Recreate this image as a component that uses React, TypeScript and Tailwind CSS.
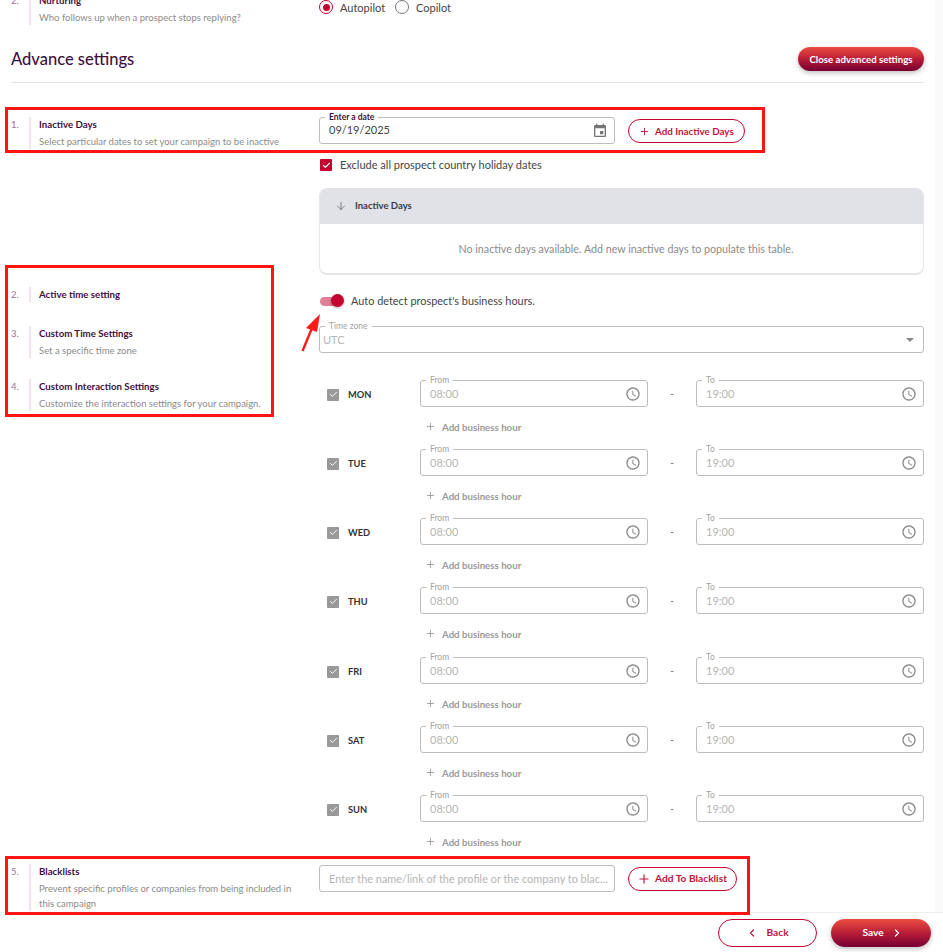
import { ChevronLeft, ChevronRight, Plus, ArrowDown, Check } from 'lucide-react';

const days = [
    { name: 'MON', gap: 'mt-0' },
    { name: 'TUE', gap: 'mt-0' },
    { name: 'WED', gap: 'mt-0' },
    { name: 'THU', gap: 'mt-0' },
    { name: 'FRI', gap: 'mt-[1px]' },
    { name: 'SAT', gap: 'mt-0' },
    { name: 'SUN', gap: 'mt-0' },
];

function SectionLabel({ num, title, desc, className }: { num: string; title: string; desc?: string; className?: string }) {
    return (
        <div className={`flex ${className ?? ''}`}>
            <span className="w-[18px] shrink-0 pt-[1px] text-[9.5px] leading-[14px] text-[#a06f9c]">{num}</span>
            <div className="w-[2px] shrink-0 bg-[#efe3ee]" />
            <div className="pl-[8px]">
                <div className="text-[9.7px] leading-[14px] font-bold text-[#3f0f3f]">{title}</div>
                {desc && <p className="mt-[3px] text-[9.5px] leading-[15px] text-[#8b8b8b]">{desc}</p>}
            </div>
        </div>
    );
}

function ClockIcon() {
    return (
        <svg viewBox="0 0 24 24" className="h-[16px] w-[16px] fill-[#8a8a8a]">
            <path d="M11.99 2C6.47 2 2 6.48 2 12s4.47 10 9.99 10C17.52 22 22 17.52 22 12S17.52 2 11.99 2zM12 20c-4.42 0-8-3.58-8-8s3.58-8 8-8 8 3.58 8 8-3.58 8-8 8z" />
            <path d="M12.5 7H11v6l5.25 3.15.75-1.23-4.5-2.67z" />
        </svg>
    );
}

function TimeField({ label, value }: { label: string; value: string }) {
    return (
        <div className="relative flex h-[27px] w-[228px] items-center justify-between rounded-[3px] border border-[#bdbdbd] pl-[9px] pr-[6px]">
            <span className="absolute -top-[6px] left-[5px] bg-white px-[4px] text-[8.5px] leading-[10px] text-[#a3a3a3]">{label}</span>
            <span className="text-[11px] text-[#b5b5b5]">{value}</span>
            <ClockIcon />
        </div>
    );
}

function OutlineButton({ label, iconSize, className }: { label: string; iconSize: number; className: string }) {
    return (
        <button type="button" className={`flex h-[24px] items-center gap-[3px] rounded-full border border-[#c4032f] bg-white pl-[7px] font-bold text-[#c0143c] ${className}`}>
            <span className="flex w-[16px] justify-center">
                <Plus size={iconSize} strokeWidth={2} />
            </span>
            {label}
        </button>
    );
}

function App() {
    return (
        <div className="relative flex h-[952px] w-[943px] flex-col overflow-hidden bg-white font-['Lato','Noto_Sans',sans-serif]">
            <div className="flex h-[912px] shrink-0 overflow-hidden">
                <div className="w-[935px] shrink-0 px-[11px]">
                    {/* clipped row from the previous section */}
                    <div className="-mt-[7px] flex h-[32px]">
                        <SectionLabel num="2." title="Nurturing" desc="Who follows up when a prospect stops replying?" className="w-[308px]" />
                        <div className="flex items-start gap-[7px] pt-[7px] text-[11px] text-[#444]">
                            <span className="flex h-[14px] w-[14px] items-center justify-center rounded-full border-[1.5px] border-[#c4032f]">
                                <span className="h-[7px] w-[7px] rounded-full bg-[#c4032f]" />
                            </span>
                            <span className="leading-[15px]">Autopilot</span>
                            <span className="ml-[3px] h-[14px] w-[14px] rounded-full border-[1.5px] border-[#777]" />
                            <span className="leading-[15px]">Copilot</span>
                        </div>
                    </div>

                    <div className="flex h-[58px] items-center justify-between border-b border-[#e3e3ea] pt-[11px]">
                        <h1 className="text-[16.5px] font-medium text-[#3f0f3f]">Advance settings</h1>
                        <button type="button" className="h-[24px] w-[126px] rounded-full bg-gradient-to-b from-[#ee4b40] via-[#b81d37] to-[#750030] text-[9.7px] font-bold text-white shadow-[0_2px_5px_rgba(0,0,0,0.25)]">
                            Close advanced settings
                        </button>
                    </div>

                    <div className="flex pt-[34px]">
                        <div className="flex w-[308px] shrink-0 flex-col">
                            <SectionLabel num="1." title="Inactive Days" desc="Select particular dates to set your campaign to be inactive" className="h-[32px]" />
                            <SectionLabel num="2." title="Active time setting" className="mt-[138px] h-[15px]" />
                            <SectionLabel num="3." title="Custom Time Settings" desc="Set a specific time zone" className="mt-[24px] h-[32px]" />
                            <SectionLabel num="4." title="Custom Interaction Settings" desc="Customize the interaction settings for your campaign." className="mt-[21px] h-[32px]" />
                            <SectionLabel num="5." title="Blacklists" desc="Prevent specific profiles or companies from being included in this campaign" className="mt-[453px] h-[47px] [&>div:last-child]:w-[270px]" />
                        </div>

                        <div className="w-[605px] shrink-0">
                            <div className="flex items-center">
                                <div className="relative flex h-[27px] w-[296px] items-center justify-between rounded-[3px] border border-[#bdbdbd] pl-[9px] pr-[6px]">
                                    <span className="absolute -top-[6px] left-[5px] bg-white px-[4px] text-[8.5px] leading-[10px] font-bold text-[#3f0f3f]">Enter a date</span>
                                    <span className="text-[11px] text-[#444]">09/19/2025</span>
                                    <svg viewBox="0 0 24 24" className="h-[16px] w-[16px] fill-[#777]">
                                        <path d="M17 12h-5v5h5v-5zM16 1v2H8V1H6v2H5c-1.11 0-1.99.9-1.99 2L3 19c0 1.1.89 2 2 2h14c1.1 0 2-.9 2-2V5c0-1.1-.9-2-2-2h-1V1h-2zm3 18H5V8h14v11z" />
                                    </svg>
                                </div>
                                <OutlineButton label="Add Inactive Days" iconSize={11} className="ml-[13px] mt-[1px] w-[117px] text-[9.8px]" />
                            </div>

                            <div className="mt-[14px] flex items-center gap-[8px] pl-[1px]">
                                <span className="flex h-[12px] w-[12px] items-center justify-center rounded-[1px] bg-[#c4032f]">
                                    <Check size={9} strokeWidth={3} color="white" />
                                </span>
                                <span className="text-[11px] leading-[14px] text-[#444]">Exclude all prospect country holiday dates</span>
                            </div>

                            <div className="mt-[16px] h-[87px] overflow-hidden rounded-[8px] border-x border-b-2 border-[#e6e6ea]">
                                <div className="flex h-[36px] items-center gap-[8px] bg-[#e1e2e8] pl-[15px] text-[9.5px] font-bold text-[#3b3b46]">
                                    <ArrowDown size={12} strokeWidth={1.6} color="#666" />
                                    Inactive Days
                                </div>
                                <p className="pl-[9px] pt-[18px] text-center text-[10.7px] leading-[14px] text-[#8b8b8b]">
                                    No inactive days available. Add new inactive days to populate this table.
                                </p>
                            </div>

                            <div className="mt-[18px] flex items-center">
                                <span className="relative ml-[1px] h-[9px] w-[22px] rounded-full bg-[#e08096]">
                                    <span className="absolute -top-[2.5px] right-[-2px] h-[13px] w-[13px] rounded-full bg-[#c4032f] shadow-[0_1px_3px_rgba(0,0,0,0.3)]" />
                                </span>
                                <span className="ml-[9px] text-[10.9px] text-[#444]">Auto detect prospect's business hours.</span>
                            </div>

                            <div className="relative mt-[17px] flex h-[27px] items-center justify-between rounded-[3px] border border-[#bdbdbd] pl-[3px] pr-[9px]">
                                <span className="absolute -top-[6px] left-[5px] bg-white px-[4px] text-[8.5px] leading-[10px] text-[#a3a3a3]">Time zone</span>
                                <span className="text-[11px] text-[#b5b5b5]">UTC</span>
                                <svg viewBox="0 0 8 4" className="h-[4px] w-[8px] fill-[#8a8a8a]">
                                    <path d="M0 0h8L4 4z" />
                                </svg>
                            </div>

                            <div className="mt-[27px]">
                                {days.map((day) => (
                                    <div key={day.name} className={day.gap}>
                                        <div className="flex items-center">
                                            <span className="ml-[8px] mt-[2px] flex h-[12px] w-[12px] items-center justify-center rounded-[1px] bg-[#999]">
                                                <Check size={9} strokeWidth={2.5} color="white" />
                                            </span>
                                            <span className="ml-[9px] mt-[2px] w-[72px] text-[9.3px] font-bold text-[#333]">{day.name}</span>
                                            <TimeField label="From" value="08:00" />
                                            <span className="w-[48px] text-center text-[11px] text-[#777]">-</span>
                                            <TimeField label="To" value="19:00" />
                                        </div>
                                        <div className="flex h-[42px] items-center gap-[6px] pb-[3px] pl-[106px] text-[9.7px] font-bold text-[#9a9a9a]">
                                            <Plus size={11} strokeWidth={1.6} color="#888" />
                                            Add business hour
                                        </div>
                                    </div>
                                ))}
                            </div>

                            <div className="mt-[1px] flex items-center">
                                <div className="flex h-[27px] w-[296px] items-center rounded-[3px] border border-[#bdbdbd] pl-[9px] pr-[4px] text-[10.9px] text-[#b5b5b5]">
                                    <span className="truncate">Enter the name/link of the profile or the company to blacklist</span>
                                </div>
                                <OutlineButton label="Add To Blacklist" iconSize={14} className="ml-[13px] w-[109px] text-[10.2px]" />
                            </div>
                        </div>
                    </div>
                </div>
                <div className="flex-1 bg-[#f9f9f9]" />
            </div>

            <div className="flex h-[40px] items-start justify-end gap-[14px] border-t border-[#eeeeee] pr-[12px] pt-[6px]">
                <button type="button" className="flex h-[28px] w-[99px] items-center justify-center gap-[8px] rounded-full border border-[#c4032f] text-[10.2px] font-bold text-[#c0143c]">
                    <ChevronLeft size={12} strokeWidth={2.4} />
                    Back
                </button>
                <button type="button" className="flex h-[28px] w-[100px] items-center justify-center gap-[7px] rounded-full bg-gradient-to-b from-[#ee4b40] via-[#b81d37] to-[#750030] pl-[3px] text-[10.2px] font-bold text-white shadow-[0_2px_5px_rgba(0,0,0,0.25)]">
                    Save
                    <ChevronRight size={12} strokeWidth={2.4} />
                </button>
            </div>

            {/* red annotation boxes drawn over the screenshot */}
            <div className="pointer-events-none absolute left-[5px] top-[107px] h-[46px] w-[760px] border-[3px] border-[#ff1414]" />
            <div className="pointer-events-none absolute left-[5px] top-[265px] h-[152px] w-[269px] border-[3px] border-[#ff1414]" />
            <div className="pointer-events-none absolute left-[5px] top-[856px] h-[59px] w-[745px] border-[3px] border-[#ff1414]" />
            <svg viewBox="0 0 24 42" className="pointer-events-none absolute left-[299px] top-[311px] h-[42px] w-[24px]">
                <path d="M3.5 40 L13 17" stroke="#ff1a1a" strokeWidth="2.4" fill="none" />
                <path d="M21 3 L7 17 L18 21 Z" fill="#ff1a1a" />
            </svg>
        </div>
    );
}

export default App;
